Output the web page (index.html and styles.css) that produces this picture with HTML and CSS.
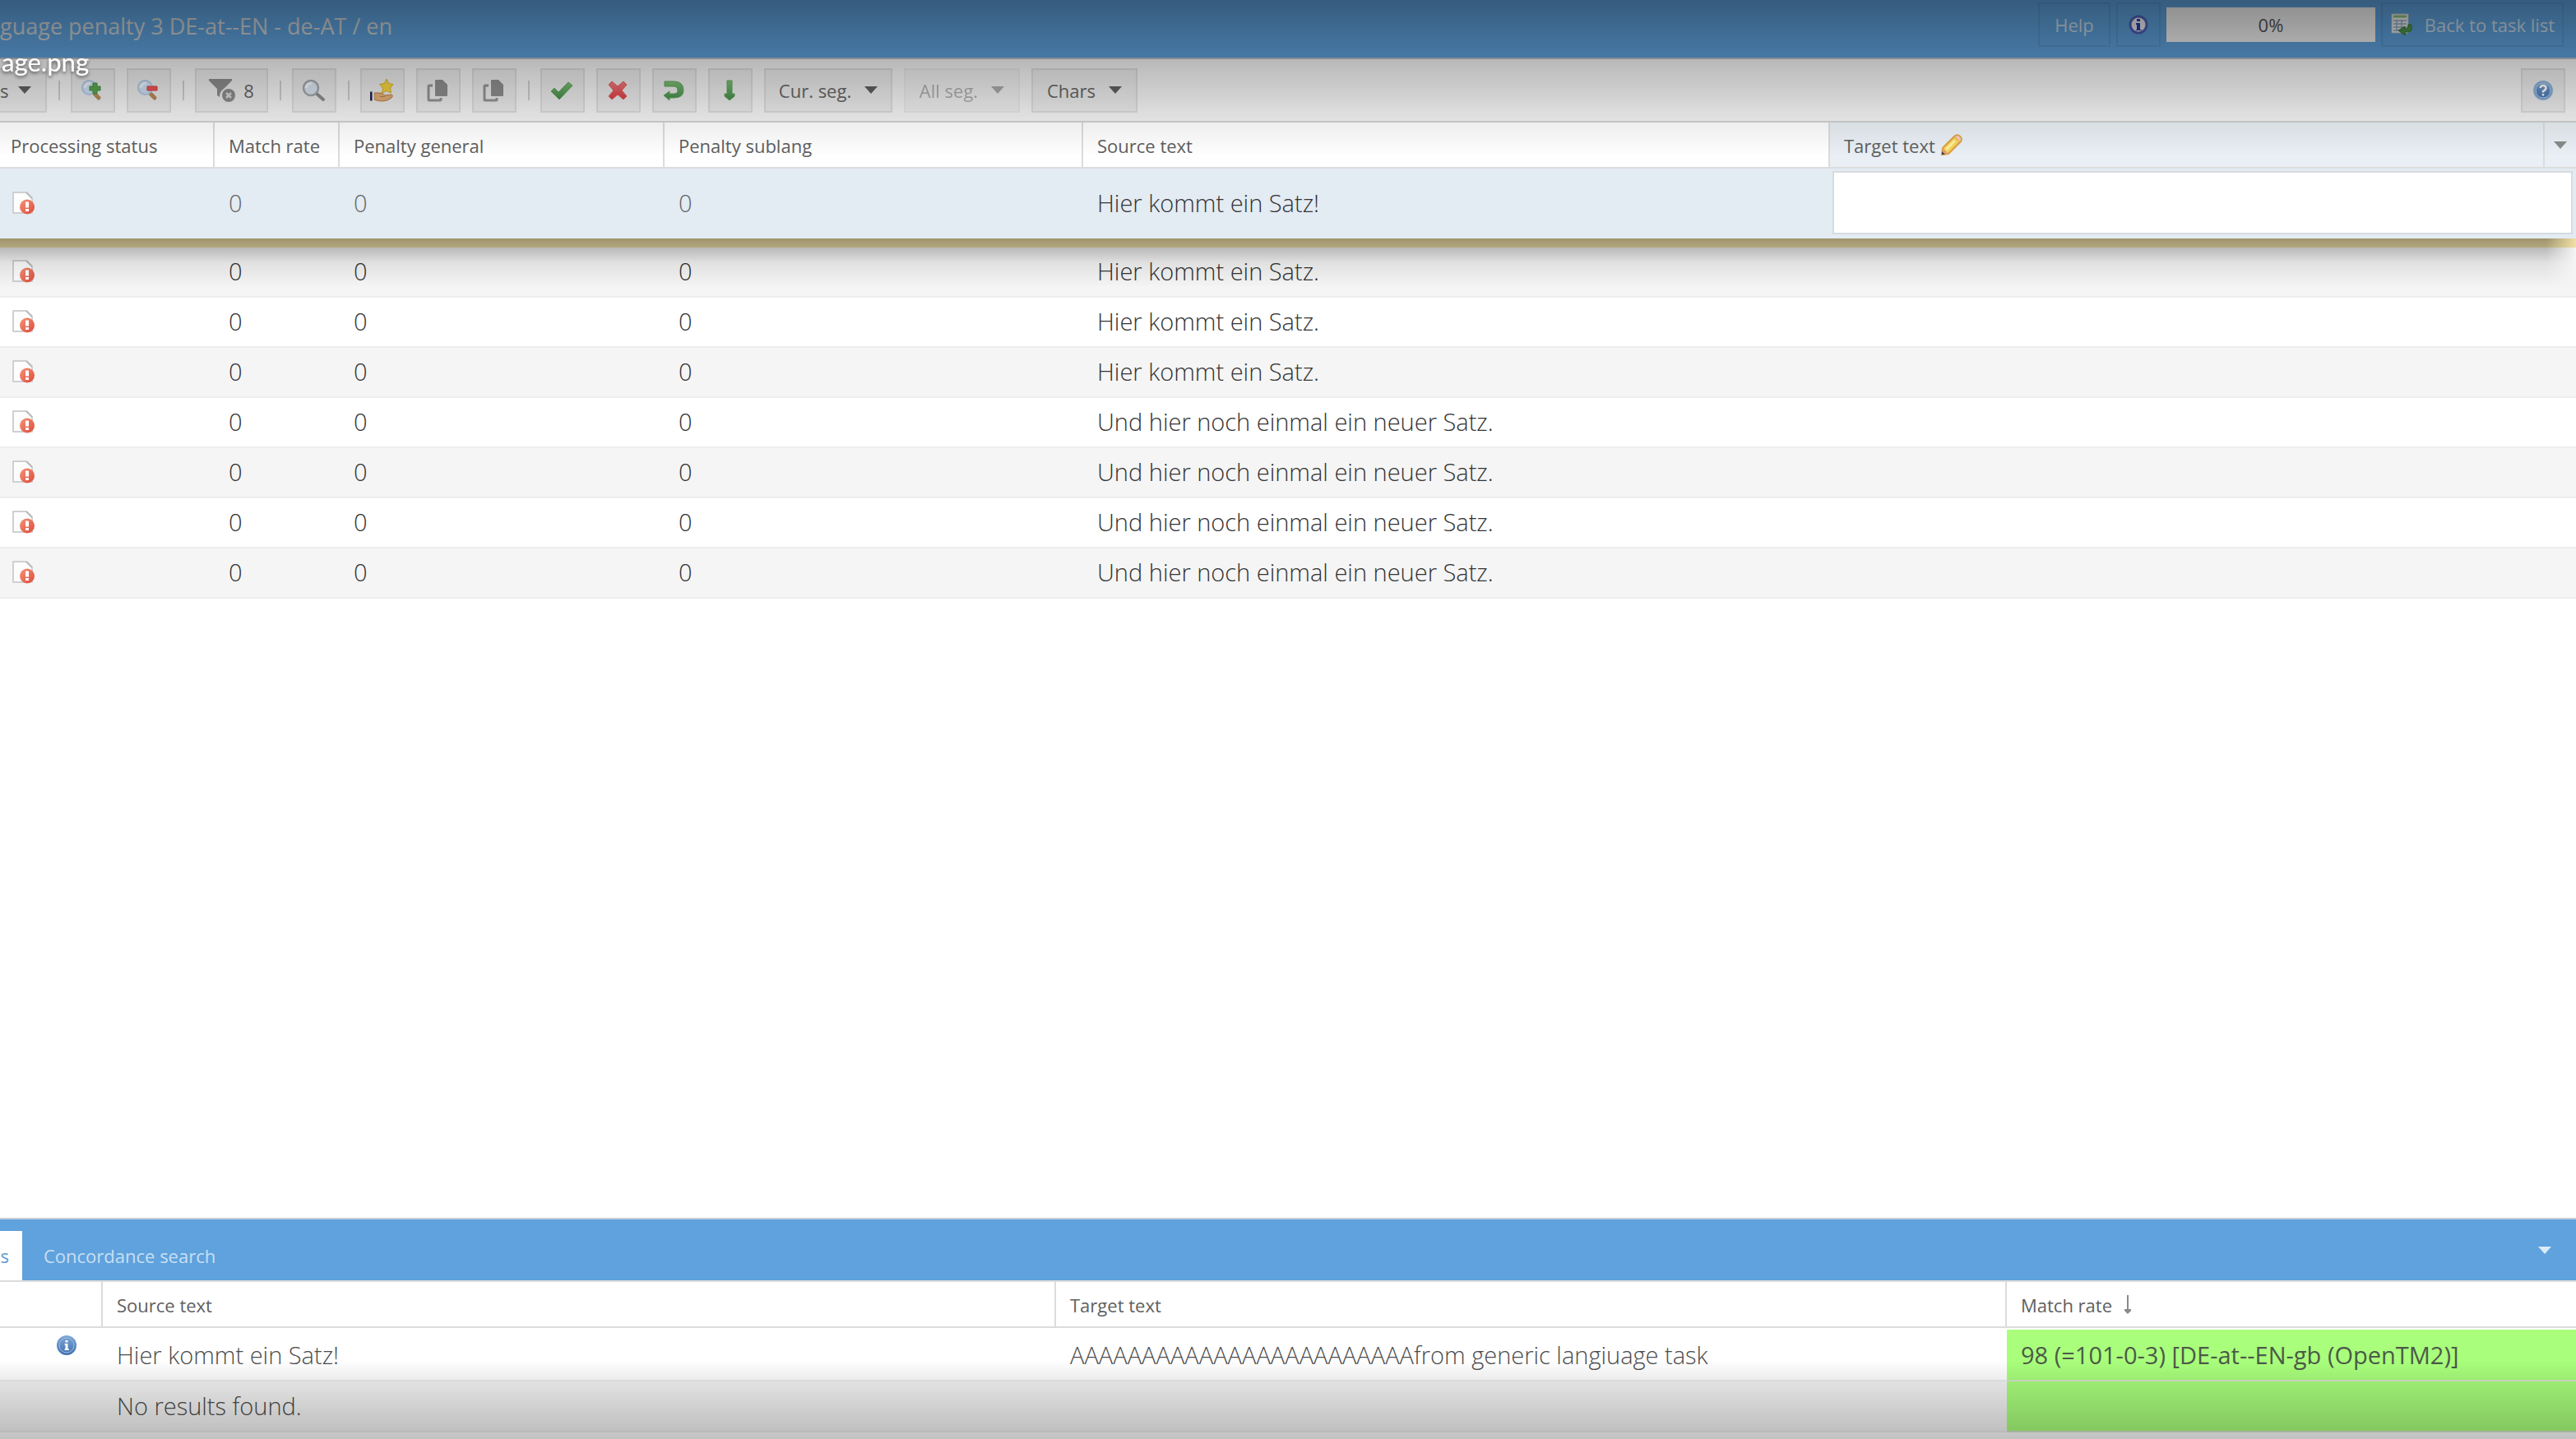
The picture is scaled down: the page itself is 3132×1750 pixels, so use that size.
FILE: index.html
```html
<!DOCTYPE html>
<html lang="en">
<head>
<meta charset="utf-8">
<title>Language penalty 3 DE-at--EN</title>
<link rel="stylesheet" href="styles.css">
</head>
<body>
<svg class="defs" aria-hidden="true">
  <defs>
    <linearGradient id="blueball" x1="0" y1="0" x2="0" y2="1"><stop offset="0" stop-color="#7fa8d6"/><stop offset="1" stop-color="#3f6fae"/></linearGradient>
    <linearGradient id="redball" x1="0" y1="0" x2="1" y2="1"><stop offset="0" stop-color="#f59478"/><stop offset="1" stop-color="#dd4a3a"/></linearGradient>
    <linearGradient id="green" x1="0" y1="0" x2="0" y2="1"><stop offset="0" stop-color="#7cbd74"/><stop offset="1" stop-color="#448a48"/></linearGradient>
    <linearGradient id="red" x1="0" y1="0" x2="0" y2="1"><stop offset="0" stop-color="#f07a7c"/><stop offset="1" stop-color="#dc3c40"/></linearGradient>
    <symbol id="i-status" viewBox="0 0 28 28">
      <path d="M1 1H17L24 8V26H1Z" fill="#fdfdfd" stroke="#cfd0d1" stroke-width="2" stroke-linejoin="round"/>
      <path d="M17 1L24 8" stroke="#b9bcbe" stroke-width="2"/>
      <circle cx="18" cy="18.500" r="9" fill="url(#redball)"/>
      <path d="M16 12.500H20V19.500H16ZM16 21H20V24H16Z" fill="#fff"/>
    </symbol>
    <symbol id="i-lens" viewBox="0 0 28 28">
      <path d="M17 18L22 23" stroke="#b98a5a" stroke-width="5" stroke-linecap="round"/>
      <circle cx="10.500" cy="10.500" r="8.500" fill="#cfe2f6" stroke="#b4cae4" stroke-width="2"/>
      <path d="M5 11Q6 5 12 5" stroke="#eef6fd" stroke-width="3" fill="none"/>
    </symbol>
    <symbol id="i-copy" viewBox="0 0 28 28">
      <path d="M12 1H20L26 7V20Q26 21 25 21H12Q11 21 11 20V2Q11 1 12 1Z" fill="#8e8e8e"/>
      <path d="M8 8H4Q3 8 3 9V25Q3 26 4 26H17Q18 26 18 25V23" stroke="#949494" stroke-width="3" fill="none"/>
    </symbol>
  </defs>
</svg>

<main class="app">
  <header class="titlebar">
    <h1>guage penalty 3 DE-at--EN - de-AT / en</h1>
    <nav class="titletools">
      <button class="tbtn help">Help</button>
      <button class="tbtn about" aria-label="About">
        <svg class="ic24" viewBox="0 0 24 24"><circle cx="12" cy="12" r="10" fill="#f3f3f8" stroke="#4f63bd" stroke-width="3"/><path d="M10 5H14V8H10ZM9 10H14V18H16V19H9V18H10V12H9Z" fill="#2a3bb4"/></svg>
      </button>
      <div class="progress" role="progressbar" aria-valuenow="0" aria-valuemin="0" aria-valuemax="100">0%</div>
      <button class="tbtn back">
        <svg class="ic28" viewBox="0 0 28 28"><path d="M2 1H22V24H2Z" fill="#f5f5f5" stroke="#b9c8cc"/><path d="M4 4H20" stroke="#8fc47a" stroke-width="3"/><path d="M4 9H20M4 13H20M4 17H20M4 21H14M8 8V22M14 8V22" stroke="#94b0cc" stroke-width="1.500"/><path d="M26 14V20Q26 23 18 23V27L10 21L18 16V19Q22 19 22 14Z" fill="#4f9a4b" stroke="#3b7b3b"/></svg>
        Back to task list</button>
    </nav>
  </header>

  <div class="toolbar">
    <button class="btn views"><span>s</span><i class="caret"></i></button>
    <i class="sep"></i>
    <button class="btn sq" aria-label="Zoom in"><svg class="ic28" viewBox="0 0 28 28"><use href="#i-lens"/><path d="M15 5H20V9H24V14H20V18H15V14H11V9H15Z" fill="#5aa552" stroke="#448f3f"/></svg></button>
    <button class="btn sq" aria-label="Zoom out"><svg class="ic28" viewBox="0 0 28 28"><use href="#i-lens"/><path d="M13 9H25V14H13Z" fill="#ee5558" stroke="#d83a40"/></svg></button>
    <i class="sep"></i>
    <button class="btn filter"><svg class="ic32" viewBox="0 0 32 28"><path d="M0 0H28V2L18 12Q13 15 13 22L10 20V12L0 2Z" fill="#8c8c8c"/><circle cx="24" cy="20" r="8" fill="#8c8c8c"/><path d="M21 17L27 23M27 17L21 23" stroke="#d8d8d8" stroke-width="2.500"/></svg><span>8</span></button>
    <i class="sep"></i>
    <button class="btn sq" aria-label="Search"><svg class="ic28" viewBox="0 0 28 28"><path d="M18 18L26 25" stroke="#8e8e8e" stroke-width="4" stroke-linecap="round"/><circle cx="11" cy="11" r="9" fill="#dbe6f3" stroke="#a5a8ac" stroke-width="2.500"/><path d="M5 11Q6 6 12 5" stroke="#f7fafd" stroke-width="3" fill="none"/></svg></button>
    <i class="sep"></i>
    <button class="btn sq" aria-label="Bookmark"><svg class="ic28" viewBox="0 0 28 28"><path d="M20 0L22.500 5.500L28 6.500L24.500 11L25.500 17L20 14.500L14.500 17L15.500 11L11.500 6.500L17.500 5.500Z" fill="#f6d53c" stroke="#d9ae2a"/><path d="M5 17H12Q15 17 18 20L26 19Q29 20 26 23Q21 27 15 27Q9 27 5 25Z" fill="#e3ae76" stroke="#b87d45"/><path d="M12 21.500H18" stroke="#b87d45"/><path d="M3 16V26" stroke="#e6e6ee" stroke-width="4"/><path d="M1 15.500V26.500" stroke="#23264f" stroke-width="3"/></svg></button>
    <button class="btn sq" aria-label="Copy source"><svg class="ic28"><use href="#i-copy"/></svg></button>
    <button class="btn sq" aria-label="Copy target"><svg class="ic28"><use href="#i-copy"/></svg></button>
    <i class="sep"></i>
    <button class="btn sq" aria-label="Save"><svg class="ic28" viewBox="0 0 28 28"><path d="M1 15L5 11L10 16L22 4L27 8L11 25Z" fill="url(#green)" stroke="#5fa55c"/></svg></button>
    <button class="btn sq" aria-label="Cancel"><svg class="ic28" viewBox="0 0 28 28"><path d="M3 7L7 3L14 9L21 3L25 7L19 14L25 21L21 25L14 19L7 25L3 21L9 14Z" fill="url(#red)" stroke="#e25b5e" stroke-linejoin="round"/></svg></button>
    <button class="btn sq" aria-label="Undo"><svg class="ic28" viewBox="0 0 28 28"><path d="M3 3H14Q26 3 26 14Q26 23 14 23H9V26L2 20L9 15V18H14Q19 18 19 14Q19 9 14 9H3Z" fill="url(#green)" stroke="#5fa55c"/></svg></button>
    <button class="btn sq" aria-label="Next segment"><svg class="ic28" viewBox="0 0 28 28"><path d="M11 2H17V18H20V21L14 26L8 21V18H11Z" fill="url(#green)" stroke="#5fa55c"/></svg></button>
    <button class="btn menu cur"><span>Cur. seg.</span><i class="caret"></i></button>
    <button class="btn menu all" disabled><span>All seg.</span><i class="caret"></i></button>
    <button class="btn menu chars"><span>Chars</span><i class="caret"></i></button>
    <button class="btn helpq" aria-label="Help"><svg class="ic24" viewBox="0 0 24 24"><circle cx="12" cy="12" r="11" fill="url(#blueball)" stroke="#8fb4dd" stroke-width="2"/><circle cx="12" cy="12" r="9" fill="none" stroke="#c8dbf0"/><path d="M8.500 9Q9 6 12 6Q15.500 6 15.500 9Q15.500 11 12 13V14.500M12 16V18.500" stroke="#fff" stroke-width="2.500" fill="none"/></svg></button>
  </div>

  <section class="gridpane">
    <table class="grid">
      <colgroup><col class="c1"><col class="c2"><col class="c3"><col class="c4"><col class="c5"><col></colgroup>
      <thead><tr>
        <th>Processing status</th><th>Match rate</th><th>Penalty general</th><th>Penalty sublang</th><th>Source text</th>
        <th class="target"><div class="targethead"><span>Target text</span>
          <svg class="ic28" viewBox="0 0 28 28"><path d="M3 18L17 4Q20 1 23 3L25 5Q27 8 24 11L10 25L2 26Z" fill="#f7d45a" stroke="#dda045" stroke-width="2"/><path d="M7 20L18 9" stroke="#fdf0a0" stroke-width="3"/><path d="M17 4L24 11L26 7L22 2Z" fill="#f3cdb0" stroke="#dda045"/><path d="M3 18L10 25L2 26Z" fill="#e0a070"/><path d="M2 22L6 26L2 26Z" fill="#4a4038"/></svg>
          <button class="trigger" aria-label="Column menu"><i class="caret"></i></button></div></th>
      </tr></thead>
      <tbody>
        <tr class="active"><td><svg class="status"><use href="#i-status"/></svg></td><td>0</td><td>0</td><td>0</td><td class="src">Hier kommt ein Satz!</td><td class="edit"><textarea aria-label="Target text"></textarea></td></tr>
        <tr class="alt"><td><svg class="status"><use href="#i-status"/></svg></td><td>0</td><td>0</td><td>0</td><td>Hier kommt ein Satz.</td><td></td></tr>
        <tr><td><svg class="status"><use href="#i-status"/></svg></td><td>0</td><td>0</td><td>0</td><td>Hier kommt ein Satz.</td><td></td></tr>
        <tr class="alt"><td><svg class="status"><use href="#i-status"/></svg></td><td>0</td><td>0</td><td>0</td><td>Hier kommt ein Satz.</td><td></td></tr>
        <tr><td><svg class="status"><use href="#i-status"/></svg></td><td>0</td><td>0</td><td>0</td><td>Und hier noch einmal ein neuer Satz.</td><td></td></tr>
        <tr class="alt"><td><svg class="status"><use href="#i-status"/></svg></td><td>0</td><td>0</td><td>0</td><td>Und hier noch einmal ein neuer Satz.</td><td></td></tr>
        <tr><td><svg class="status"><use href="#i-status"/></svg></td><td>0</td><td>0</td><td>0</td><td>Und hier noch einmal ein neuer Satz.</td><td></td></tr>
        <tr class="alt"><td><svg class="status"><use href="#i-status"/></svg></td><td>0</td><td>0</td><td>0</td><td>Und hier noch einmal ein neuer Satz.</td><td></td></tr>
      </tbody>
    </table>
    <div class="rowshadow"></div>
  </section>

  <section class="resources">
    <div class="tabs">
      <button class="tab on">s</button>
      <button class="tab">Concordance search</button>
      <button class="collapse" aria-label="Collapse"><i class="caret"></i></button>
    </div>
    <table class="grid matches">
      <colgroup><col class="m1"><col class="m2"><col class="m3"><col></colgroup>
      <thead><tr><th></th><th>Source text</th><th>Target text</th><th><div class="sorted">Match rate <svg class="sort" viewBox="0 0 10 24"><path d="M4 0H6V17H9V19L5 23L1 19V17H4Z" fill="#8a8a8a"/></svg></div></th></tr></thead>
      <tbody>
        <tr class="first"><td class="info"><svg class="ic24" viewBox="0 0 24 24"><circle cx="12" cy="12" r="12" fill="url(#blueball)"/><circle cx="12" cy="12" r="9" fill="none" stroke="#9fbfe4"/><path d="M10.500 6H13.500V8.500H10.500ZM9.500 10H13.500V16.500H15V18H9.500V16.500H10.500V11.500H9.500Z" fill="#fff"/></svg></td><td>Hier kommt ein Satz!</td><td>AAAAAAAAAAAAAAAAAAAAAAAAfrom generic langiuage task</td><td class="rate">98 (=101-0-3) [DE-at--EN-gb (OpenTM2)]</td></tr>
        <tr class="alt"><td></td><td>No results found.</td><td></td><td class="rate"></td></tr>
      </tbody>
    </table>
  </section>
</main>

<div class="shade top"></div>
<div class="shade bottom"></div>
<div class="filename">age.png</div>
</body>
</html>
```

FILE: styles.css
```css
* { box-sizing: border-box; }
body { margin: 0; font-family: "Open Sans", sans-serif; color: #404040; background: #fff; overflow: hidden; }
button { font: inherit; color: inherit; margin: 0; padding: 0; border: 0; background: none; }
svg { display: block; flex: none; }
.defs { position: absolute; width: 0; height: 0; }
.ic24 { width: 24px; height: 24px; }
.ic28 { width: 28px; height: 28px; }
.ic32 { width: 32px; height: 28px; }
.app { display: flex; flex-direction: column; height: 100vh; }

.titlebar { display: flex; justify-content: space-between; align-items: flex-start; height: 72px; background: #5fa2dd; border-bottom: 2px solid #b4bcc4; }
.titlebar h1 { margin: 0; padding-top: 12px; font-size: 27px; line-height: 40px; font-weight: 400; color: #d0d4d8; white-space: nowrap; }
.titletools { display: flex; align-items: center; gap: 7px; padding: 3px 15px 0 0; font-size: 22px; color: #cbdbea; }
.tbtn { display: flex; align-items: center; justify-content: center; gap: 14px; height: 54px; border: 2px solid #5896cd; }
.help { width: 88px; }
.about { width: 54px; }
.back { width: 222px; }
.progress { width: 254px; height: 42px; line-height: 42px; text-align: center; background: #f5f5f5; color: #555; font-size: 22px; }

.toolbar { display: flex; align-items: center; height: 77px; padding-right: 13px; background: #f5f5f5; border-bottom: 2px solid #d2d2d2; font-size: 22px; color: #666; }
.btn { display: flex; align-items: center; justify-content: center; height: 54px; border: 2px solid #dcdcdc; background: #ebebeb; }
.btn + .btn { margin-left: 14px; }
.sq { width: 54px; }
.btn.sq { padding-right: 2px; }
.views { width: 57px; justify-content: flex-start; gap: 12px; border-left: 0; }
.sep { width: 2px; height: 24px; margin: 0 13px 0 14px; background: #cdcdcd; }
.filter { width: 89px; gap: 10px; }
.menu { gap: 16px; }
.cur { width: 156px; }
.all { width: 141px; }
.chars { width: 129px; }
.btn:disabled { opacity: .5; }
.btn.helpq { width: 54px; margin-left: auto; }
.caret { width: 0; height: 0; border: 8px solid transparent; border-top: 9px solid #606060; border-bottom: 0; }

.gridpane { position: relative; flex: 1; min-height: 0; }
.grid { width: 100%; table-layout: fixed; border-collapse: separate; border-spacing: 0; }
.c1 { width: 261px; } .c2 { width: 152px; } .c3 { width: 395px; } .c4 { width: 509px; } .c5 { width: 908px; }
.grid th { height: 56px; padding: 2px 0 0 17px; text-align: left; font-size: 22px; font-weight: 400; line-height: 30px; color: #606060; border-right: 2px solid #dcdcdc; border-bottom: 2px solid #dcdcdc; white-space: nowrap; }
.grid th:first-child { padding-left: 13px; }
.grid th:last-child { border-right: 0; }
.grid td { height: 61px; padding: 0 0 2px 17px; font-size: 29px; line-height: 40px; font-weight: 300; color: #333; border-bottom: 2px solid #ededed; white-space: nowrap; }
.grid td:first-child { padding-left: 15px; }
.grid .alt td { background: #f5f5f5; }
.grid th.target { padding-top: 0; background: #e9eff4; }
.targethead { display: flex; align-items: center; gap: 6px; height: 54px; }
.targethead span { padding-top: 2px; }
.trigger { display: flex; align-items: center; justify-content: center; width: 40px; height: 54px; margin-left: auto; border-left: 2px solid #dcdcdc; }
.trigger .caret, .collapse .caret { border-width: 9px 8px 0; border-top-color: #8a8a8a; }
.grid .active td { height: 96px; background: #e3ebf3; color: #666; border-bottom: 11px solid #f0e0a6; }
.grid .active .src { color: #333; }
.grid .active .edit { padding: 3px 4px 5px 3px; }
textarea { display: block; width: 100%; height: 77px; border: 2px solid #d6dbe0; background: #fff; resize: none; font: inherit; }
.status { width: 28px; height: 28px; }
/* soft shadow under the row being edited */
.rowshadow { position: absolute; left: 0; right: 0; top: 141px; height: 60px; background: linear-gradient(rgba(0,0,0,.34), rgba(0,0,0,.24) 20%, rgba(0,0,0,.08) 50%, transparent); mask-image: linear-gradient(to right, #000 calc(100% - 36px), transparent); pointer-events: none; }

.resources { height: 269px; border-top: 2px solid #c5cdd5; background: #fff; }
.tabs { display: flex; align-items: flex-end; height: 74px; background: #5fa2dd; font-size: 22px; color: #c9dff3; }
.tab { height: 60px; padding: 0 26px; }
.tab.on { width: 27px; padding: 0 16px 0 0; text-align: right; background: #fff; color: #5f9bd0; }
.collapse { margin: 0 30px 32px auto; }
.collapse .caret { display: block; border-top-color: #dcebf8; }
.matches th { border-top: 2px solid #dcdcdc; height: 58px; }
.m1 { width: 125px; } .m2 { width: 1159px; } .m3 { width: 1156px; }
.grid.matches td { height: 62px; padding-bottom: 0; color: #4c4c4c; }
.grid.matches .first td { height: 65px; border-top: 2px solid #fff; }
.grid.matches td.info { padding: 0 0 24px 69px; }
.grid.matches td.rate { background: #a9ff7c; font-weight: 400; color: #4c5a48; border-bottom-color: #d5e3cc; }
.sorted { display: flex; align-items: center; gap: 14px; }
.sort { width: 10px; height: 24px; }

/* viewer chrome: dark fades at both window edges and the file name */
.shade { position: fixed; left: 0; right: 0; pointer-events: none; }
.shade.top { top: 0; height: 190px; background: linear-gradient(rgba(0,0,0,.43), rgba(0,0,0,.25) 37%, rgba(0,0,0,.07) 78%, transparent); }
.shade.bottom { bottom: 0; height: 96px; background: linear-gradient(transparent, rgba(0,0,0,.07) 24%, rgba(0,0,0,.24)); }
.filename { position: fixed; left: 2px; top: 55px; font: 500 31px/40px Lato, sans-serif; color: #fff; text-shadow: 0 2px 4px rgba(0,0,0,.6); }
```
